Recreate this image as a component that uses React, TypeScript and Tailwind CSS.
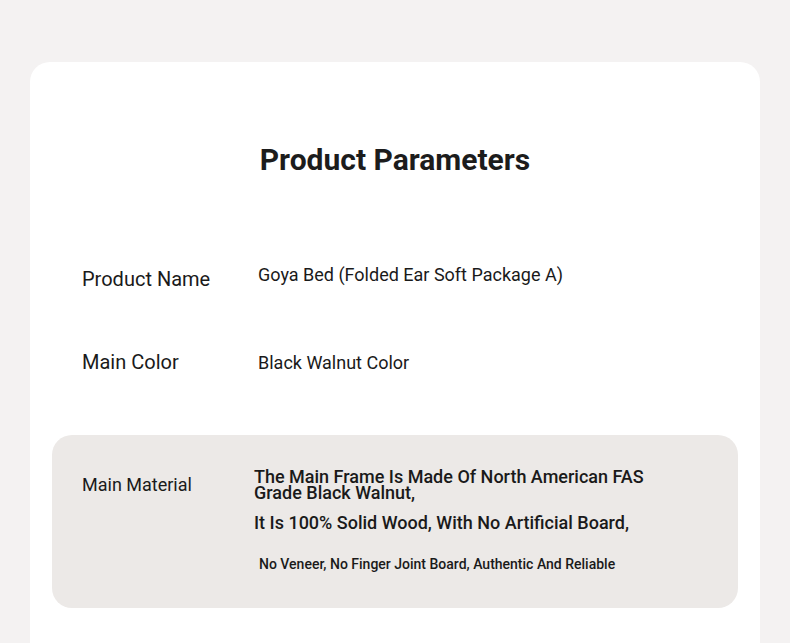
import React from 'react';

const rows = [
  { label: 'Product Name', value: 'Goya Bed (Folded Ear Soft Package A)' },
  { label: 'Main Color', value: 'Black Walnut Color' },
];

const App: React.FC = () => {
  return (
    <div className="min-h-[643px] h-[643px] overflow-hidden bg-[#f4f2f2] px-[30px] pt-[62px] font-['Roboto',sans-serif] text-[#1a1a1a]">
      <div className="bg-white rounded-[20px] h-[700px] px-[22px]">
        {/* Title */}
        <div className="pt-[83px] text-center">
          <h2 className="text-[30px] leading-[30px] font-bold text-[#1c1c1c]">Product Parameters</h2>
        </div>

        {/* Simple rows */}
        <div className="mt-[90px] px-[30px] flex items-start">
          <div className="w-[176px] mt-[2px] text-[20px] leading-[24px]">{rows[0].label}</div>
          <div className="text-[18px] leading-[20px]">{rows[0].value}</div>
        </div>
        <div className="mt-[59px] px-[30px] flex items-start">
          <div className="w-[176px] text-[20px] leading-[24px]">{rows[1].label}</div>
          <div className="mt-[3px] text-[18px] leading-[20px]">{rows[1].value}</div>
        </div>

        {/* Material block */}
        <div className="mt-[61px] h-[173px] rounded-[20px] bg-[#ece9e7] px-[30px] pt-[34px] flex items-start">
          <div className="w-[172px] mt-[5px] text-[18px] leading-[22px]">Main Material</div>
          <div className="flex flex-col">
            <p className="text-[18px] leading-[16px] font-medium">
              The Main Frame Is Made Of North American FAS
              <br />
              Grade Black Walnut,
            </p>
            <p className="mt-[11px] text-[18px] leading-[22px] font-medium">It Is 100% Solid Wood, With No Artificial Board,</p>
            <p className="mt-[21px] pl-[5px] text-[14px] leading-[18px] font-medium">
              No Veneer, No Finger Joint Board, Authentic And Reliable
            </p>
          </div>
        </div>
      </div>
    </div>
  );
};

export default App;
